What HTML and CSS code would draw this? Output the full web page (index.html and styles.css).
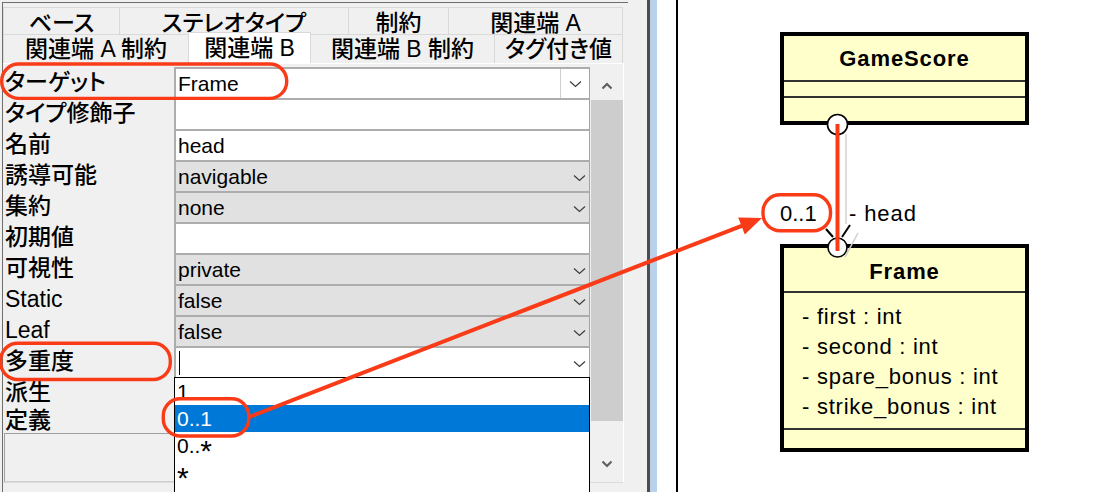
FILE: index.html
```html
<!DOCTYPE html>
<html lang="ja">
<head>
<meta charset="utf-8">
<title>関連端 B</title>
<link rel="stylesheet" href="styles.css">
</head>
<body>
<div class="app">
  <section class="props">
    <div class="props-inner">
      <div class="tabs">
        <div class="tab-row tab-row-1">
          <div class="tab tab-base">ベース</div>
          <div class="tab tab-stereo">ステレオタイプ</div>
          <div class="tab tab-constraint">制約</div>
          <div class="tab tab-enda">関連端 A</div>
        </div>
        <div class="tab-row tab-row-2">
          <div class="tab tab-enda-c">関連端 A 制約</div>
          <div class="tab tab-endb active">関連端 B</div>
          <div class="tab tab-endb-c">関連端 B 制約</div>
          <div class="tab tab-tagged">タグ付き値</div>
        </div>
      </div>
      <div class="grid-area">
        <div class="sheet">
          <div class="row">
            <div class="label">ターゲット</div>
            <div class="value edit-combo"><span>Frame</span>
              <span class="combo-btn"><svg class="chev" width="13" height="8" viewBox="0 0 13 8"><path d="M1 1.5 L6.5 6.5 L12 1.5" fill="none" stroke="#3c3c3c" stroke-width="1.2"/></svg></span>
            </div>
          </div>
          <div class="row"><div class="label">タイプ修飾子</div><div class="value"></div></div>
          <div class="row"><div class="label">名前</div><div class="value"><span>head</span></div></div>
          <div class="row"><div class="label">誘導可能</div><div class="value choice"><span>navigable</span><svg class="chev" width="13" height="8" viewBox="0 0 13 8"><path d="M1 1.5 L6.5 6.5 L12 1.5" fill="none" stroke="#3c3c3c" stroke-width="1.2"/></svg></div></div>
          <div class="row"><div class="label">集約</div><div class="value choice"><span>none</span><svg class="chev" width="13" height="8" viewBox="0 0 13 8"><path d="M1 1.5 L6.5 6.5 L12 1.5" fill="none" stroke="#3c3c3c" stroke-width="1.2"/></svg></div></div>
          <div class="row"><div class="label">初期値</div><div class="value"></div></div>
          <div class="row"><div class="label">可視性</div><div class="value choice"><span>private</span><svg class="chev" width="13" height="8" viewBox="0 0 13 8"><path d="M1 1.5 L6.5 6.5 L12 1.5" fill="none" stroke="#3c3c3c" stroke-width="1.2"/></svg></div></div>
          <div class="row"><div class="label">Static</div><div class="value choice"><span>false</span><svg class="chev" width="13" height="8" viewBox="0 0 13 8"><path d="M1 1.5 L6.5 6.5 L12 1.5" fill="none" stroke="#3c3c3c" stroke-width="1.2"/></svg></div></div>
          <div class="row"><div class="label">Leaf</div><div class="value choice"><span>false</span><svg class="chev" width="13" height="8" viewBox="0 0 13 8"><path d="M1 1.5 L6.5 6.5 L12 1.5" fill="none" stroke="#3c3c3c" stroke-width="1.2"/></svg></div></div>
          <div class="row">
            <div class="label">多重度</div>
            <div class="value open"><span class="caret"></span><svg class="chev" width="13" height="8" viewBox="0 0 13 8"><path d="M1 1.5 L6.5 6.5 L12 1.5" fill="none" stroke="#3c3c3c" stroke-width="1.2"/></svg>
              <ul class="popup">
                <li class="opt">1</li>
                <li class="opt sel">0..1</li>
                <li class="opt">0..<span class="ast">*</span></li>
                <li class="opt"><span class="ast">*</span></li>
              </ul>
            </div>
          </div>
          <div class="row"><div class="label">派生</div><div class="value choice"></div></div>
          <div class="def-label">定義</div>
          <div class="def-box"></div>
        </div>
        <div class="vscroll">
          <div class="sb-btn up"><svg width="12" height="8" viewBox="0 0 12 8"><path d="M1.5 6.5 L6 2 L10.5 6.5" fill="none" stroke="#606060" stroke-width="2.2"/></svg></div>
          <div class="sb-thumb"></div>
          <div class="sb-track"></div>
          <div class="sb-btn down"><svg width="12" height="8" viewBox="0 0 12 8"><path d="M1.5 1.5 L6 6 L10.5 1.5" fill="none" stroke="#606060" stroke-width="2.2"/></svg></div>
        </div>
      </div>
    </div>
  </section>
  <div class="splitter"></div>
  <div class="splitter-edge"></div>
  <div class="gutter"></div>
  <main class="canvas">
    <div class="uml-class gamescore">
      <div class="cls-name">GameScore</div>
      <div class="cls-empty"></div>
      <div class="cls-ops"></div>
    </div>
    <div class="uml-class frame">
      <div class="cls-name frame-name">Frame</div>
      <div class="cls-attrs">
        <div>- first : int</div>
        <div>- second : int</div>
        <div>- spare_bonus : int</div>
        <div>- strike_bonus : int</div>
      </div>
      <div class="cls-ops"></div>
    </div>
    <div class="end-mult">0..1</div>
    <div class="end-role">- head</div>
    <svg class="diagram" width="424" height="492" viewBox="0 0 424 492">
      <line x1="168" y1="134" x2="168" y2="224" stroke="#d2d2d2" stroke-width="1.5"/>
      <line x1="180" y1="233" x2="167" y2="257" stroke="#cfcfcf" stroke-width="1.5"/>
      <line x1="159.5" y1="134" x2="159.5" y2="238" stroke="#000" stroke-width="1.5"/>
      <line x1="148" y1="229" x2="155" y2="237" stroke="#000" stroke-width="2"/>
      <line x1="172" y1="225" x2="164" y2="237" stroke="#000" stroke-width="2"/>
      <circle cx="159.5" cy="124.5" r="10" fill="#fff" stroke="#000" stroke-width="1.6"/>
      <circle cx="159.5" cy="247.5" r="9.5" fill="#fff" stroke="#000" stroke-width="1.6"/>
    </svg>
  </main>
  <svg class="annot" width="1102" height="492" viewBox="0 0 1102 492">
    <g fill="none" stroke="#f93b18" stroke-width="3.4">
      <rect x="1.7" y="64" width="285" height="34.4" rx="17"/>
      <rect x="0.7" y="343.3" width="169.6" height="36.2" rx="17"/>
      <rect x="163.3" y="398.7" width="85.4" height="37.3" rx="17"/>
      <rect x="763" y="194.7" width="67.5" height="36" rx="17"/>
      <line x1="249" y1="417" x2="743" y2="225.3" stroke-width="4"/>
      <line x1="837.5" y1="124" x2="837.5" y2="251" stroke-width="4"/>
    </g>
    <polygon points="762,218 744.8,234.4 738.2,217.6" fill="#f93b18"/>
  </svg>
</div>
</body>
</html>
```
FILE: styles.css
```css
* { box-sizing: border-box; }
html, body { margin: 0; padding: 0; }
body {
  width: 1102px;
  height: 492px;
  overflow: hidden;
  background: #fff;
  font-family: "Liberation Sans", "Noto Sans CJK JP", sans-serif;
  color: #000;
}
.app {
  position: relative;
  display: flex;
  width: 1102px;
  height: 492px;
}

/* ---------- property panel ---------- */
.props {
  width: 647px;
  flex: none;
  background: #f0f0f0;
  padding: 2px 0 0 2px;
  font-feature-settings: "palt";
}
.props-inner {
  width: 626px;
  height: 490px;
  border-top: 1px solid #6e6e6e;
  border-left: 1px solid #6e6e6e;
}
.tabs { padding-top: 4px; }
.tab-row { display: flex; }
.tab-row-1 { height: 27px; }
.tab-row-2 { height: 29px; }
.tab {
  border-top: 1px solid #d9d9d9;
  border-left: 1px solid #d9d9d9;
  background: #f0f0f0;
  text-align: center;
  font-size: 23px;
  font-weight: 500;
  white-space: nowrap;
}
.tab:last-child { border-right: 1px solid #d9d9d9; }
.tab-row-1 .tab { line-height: 24px; padding-top: 3px; }
.tab-row-2 .tab { line-height: 28px; }
.tab.active {
  position: relative;
  z-index: 1;
  background: #fff;
  margin-top: -2px;
  height: 31px;
  line-height: 30px;
  border-right: 1px solid #d9d9d9;
}
.tab.active + .tab { border-left: none; }
.tab-base { width: 116px; }
.tab-stereo { width: 229px; }
.tab-constraint { width: 100px; }
.tab-enda { width: 175px; }
.tab-enda-c { width: 185px; }
.tab-endb { width: 123px; }
.tab-endb-c { width: 183px; }
.tab-tagged { width: 129px; }

.grid-area {
  display: flex;
  width: 621px;
  height: 420px;
  padding-top: 3px;
  border-top: 1px solid #fff;
  border-right: 1px solid #fff;
  border-bottom: 1px solid #dcdcdc;
}
.sheet {
  width: 587px;
  display: flex;
  flex-direction: column;
}
.row { display: flex; height: 31px; }
.label {
  width: 171px;
  flex: none;
  padding-left: 2px;
  font-size: 23px;
  font-weight: 500;
  line-height: 31px;
  white-space: nowrap;
}
.value {
  flex: 1;
  position: relative;
  display: flex;
  align-items: center;
  justify-content: space-between;
  background: #fff;
  border-top: 2px solid #adadad;
  border-left: 2px solid #adadad;
  border-right: 1px solid #a3a3a3;
  padding-left: 2px;
  font-size: 21px;
  line-height: 29px;
  white-space: nowrap;
}
.value.choice { background: #e1e1e1; }
.chev { margin: 3px 3px 0 0; flex: none; }
.edit-combo { padding-right: 0; }
.combo-btn {
  width: 29px;
  height: 29px;
  border-left: 1px solid #cfcfcf;
  display: flex;
  align-items: center;
  justify-content: center;
}
.combo-btn .chev { margin: 0; }
.caret {
  width: 1px;
  height: 24px;
  background: #000;
  margin-left: 1px;
}
.popup {
  position: absolute;
  z-index: 5;
  top: 100%;
  left: -2px;
  width: 416px;
  height: 116px;
  overflow: hidden;
  margin: 0;
  padding: 0;
  list-style: none;
  background: #fff;
  border: 1px solid #000;
  border-bottom: none;
}
.opt {
  height: 27px;
  line-height: 27px;
  padding-left: 2px;
  font-size: 21px;
}
.opt.sel { background: #0078d7; color: #fff; }
.ast {
  display: inline-block;
  font-size: 30px;
  line-height: 0;
  vertical-align: -8px;
}
.def-label {
  height: 25px;
  padding-left: 2px;
  font-size: 23px;
  font-weight: 500;
  line-height: 25px;
}
.def-box {
  height: 49px;
  margin: 0 1px;
  border: 1px solid #a0a0a0;
  border-bottom-color: #d0d0d0;
  background: #f0f0f0;
}
.vscroll {
  width: 33px;
  display: flex;
  flex-direction: column;
  background: #f0f0f0;
  padding-left: 1px;
}
.sb-btn {
  display: flex;
  align-items: center;
  justify-content: center;
}
.sb-btn.up { height: 33px; padding-top: 4px; }
.sb-btn.down { height: 34px; padding-bottom: 3px; }
.sb-thumb { height: 321px; background: #cdcdcd; }
.sb-track { flex: 1; }

/* ---------- splitter ---------- */
.splitter { width: 3px; flex: none; background: #4d4d4d; }
.splitter-edge { width: 7px; flex: none; background: #b9d1ea; }
.gutter { width: 19px; flex: none; background: #fff; }

/* ---------- diagram canvas ---------- */
.canvas {
  flex: 1;
  position: relative;
  background: #fff;
  border-left: 2px solid #000;
  font-family: "Liberation Sans", sans-serif;
}
.uml-class {
  position: absolute;
  left: 102px;
  width: 249px;
  display: flex;
  flex-direction: column;
  background: #ffffcc;
  border: 4px solid #000;
  z-index: 1;
}
.gamescore { top: 32px; height: 93px; }
.frame { top: 244px; height: 208px; }
.cls-name {
  height: 46px;
  padding-top: 1px;
  line-height: 43px;
  font-size: 22px;
  font-weight: bold;
  letter-spacing: 0.9px;
  text-align: center;
  border-bottom: 2px solid #333;
}
.frame-name {
  height: 45px;
  padding-top: 4px;
  line-height: 39px;
}
.cls-empty {
  height: 16px;
  border-bottom: 2px solid #333;
}
.cls-attrs {
  height: 137px;
  padding: 9px 0 6px 18px;
  font-size: 22px;
  line-height: 30px;
  letter-spacing: 0.75px;
  border-bottom: 2px solid #333;
  white-space: nowrap;
}
.cls-ops { flex: 1; }
.end-mult {
  position: absolute;
  left: 102px;
  top: 202px;
  font-size: 22px;
  line-height: 24px;
}
.end-role {
  position: absolute;
  left: 171px;
  top: 202px;
  font-size: 22px;
  line-height: 24px;
  letter-spacing: 0.9px;
}
.diagram {
  position: absolute;
  left: 0;
  top: 0;
  z-index: 2;
}

/* ---------- annotations ---------- */
.annot {
  position: absolute;
  left: 0;
  top: 0;
  z-index: 10;
  pointer-events: none;
}
```
